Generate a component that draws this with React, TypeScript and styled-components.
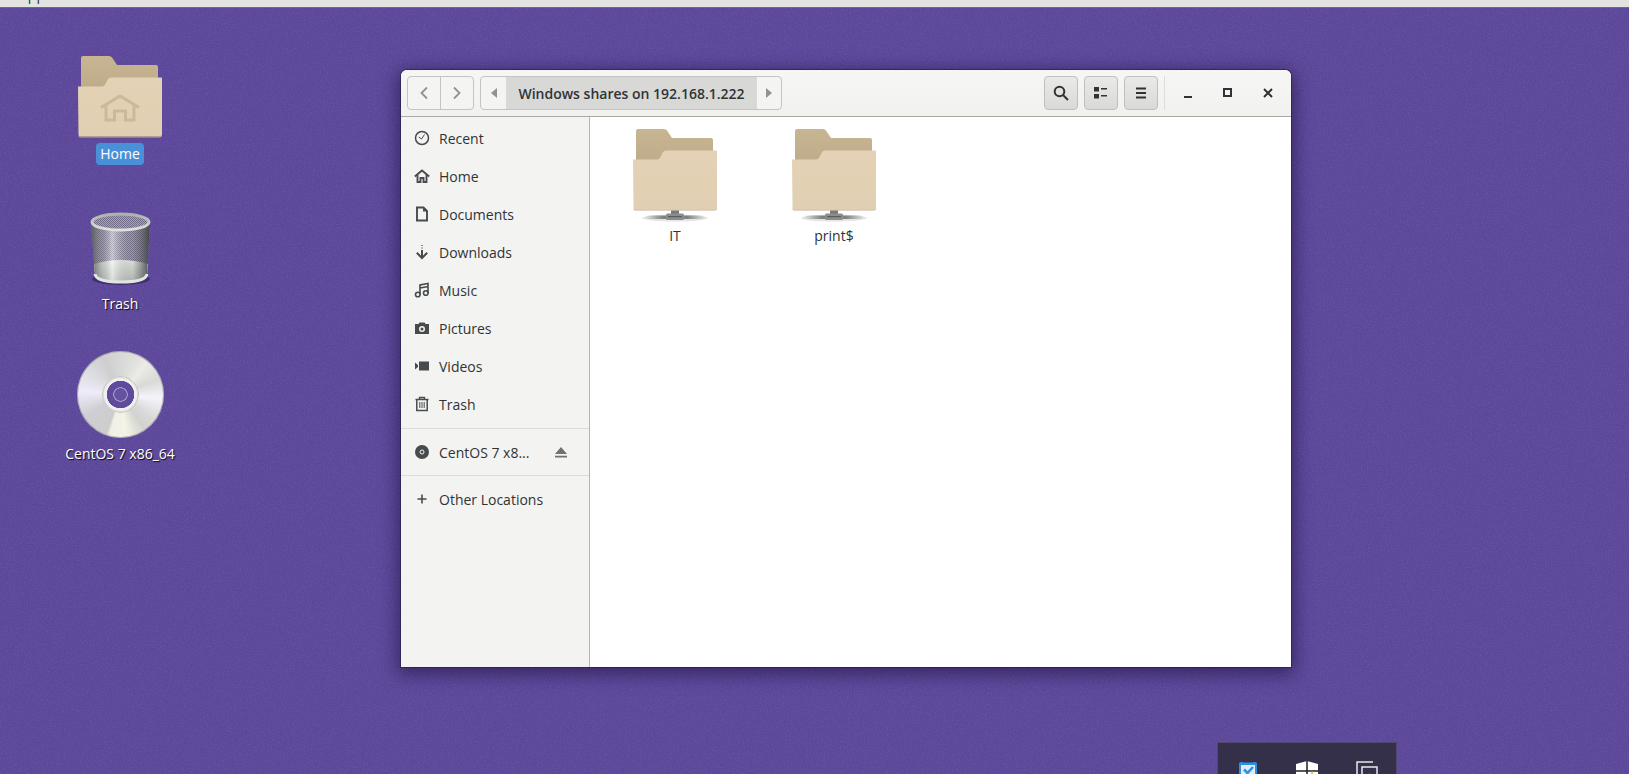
import styled, { createGlobalStyle } from 'styled-components';
import type { ReactNode } from 'react';

const GlobalStyle = createGlobalStyle`
  html, body {
    margin: 0;
    padding: 0;
    height: 100%;
    overflow: hidden;
  }
  body {
    font-family: "Open Sans", "Noto Sans", sans-serif;
    font-size: 14px;
  }
`;

const Desktop = styled.div`
  position: relative;
  width: 1629px;
  height: 774px;
  overflow: hidden;
  background-color: #5c479a;
`;

const NoiseLayer = styled.svg`
  position: absolute;
  left: 0;
  top: 0;
`;

const TopStrip = styled.div`
  position: relative;
  height: 7px;
  padding-left: 19px;
  overflow: hidden;
  background: #e3e3e1;
  border-bottom: 1px solid #6f6d72;
`;

// only the descenders of the menu title stick out below the top of the screen
const StripTitle = styled.div`
  margin-top: -12px;
  line-height: 14px;
  color: #2e3436;
`;

const DesktopArea = styled.div`
  position: relative;
  display: flex;
  height: 766px;
  padding-left: 60px;
`;

const IconColumn = styled.div`
  display: flex;
  flex-direction: column;
  width: 120px;
  padding-top: 47px;
`;

const DesktopItem = styled.div<{ $height: number }>`
  display: flex;
  flex-direction: column;
  align-items: center;
  height: ${(p) => p.$height}px;
`;

const DesktopLabel = styled.span<{ $selected?: boolean; $gap: number }>`
  margin-top: ${(p) => p.$gap}px;
  padding: 0 4px;
  height: 22px;
  line-height: 21px;
  border-radius: 4px;
  color: #fff;
  white-space: nowrap;
  background: ${(p) => (p.$selected ? '#4a90d9' : 'transparent')};
  text-shadow: ${(p) => (p.$selected ? 'none' : '1px 1px 1px rgba(0, 0, 0, 0.9)')};
`;

const DiscFace = styled.div`
  flex: none;
  width: 87px;
  height: 87px;
  border-radius: 50%;
  box-shadow: inset 0 0 0 1px rgba(150, 150, 160, 0.7);
  background:
    radial-gradient(
      circle,
      #6553a2 0 6px,
      #a99ecb 6.5px 7px,
      #5f4a9c 7.5px 13.5px,
      #f0f0ee 14px 16px,
      #c9c9c9 18px,
      transparent 18.5px
    ),
    conic-gradient(
      #d8d8d8 0deg,
      #e0e0dc 22deg,
      #ecebe6 40deg,
      #d9d9d6 68deg,
      #f4f4fa 95deg,
      #dadada 125deg,
      #d2d2d0 145deg,
      #f3f3e6 172deg,
      #f0f0e6 195deg,
      #cdcdcd 200deg,
      #cfcfd4 240deg,
      #eeecf8 275deg,
      #dcdce2 305deg,
      #cfcfd0 335deg,
      #d8d8d8 360deg
    );
`;

const Window = styled.div`
  position: absolute;
  left: 401px;
  top: 70px;
  width: 890px;
  height: 597px;
  display: flex;
  flex-direction: column;
  background: #fff;
  border-radius: 6px 6px 0 0;
  box-shadow:
    0 0 0 1px rgba(35, 25, 70, 0.55),
    0 4px 18px 3px rgba(20, 10, 50, 0.55);
  overflow: hidden;
`;

const HeaderBar = styled.div`
  flex: none;
  height: 46px;
  display: flex;
  align-items: center;
  padding: 0 3px 0 6px;
  background: linear-gradient(#f6f6f5, #f1f1f0);
  border-bottom: 1px solid #a9a8a3;
  box-sizing: content-box;
`;

const ButtonGroup = styled.div`
  display: flex;
  height: 34px;
  border: 1px solid #c4c4c1;
  border-radius: 4px;
  overflow: hidden;
  box-sizing: border-box;
  background: #f4f4f3;
`;

const NavButton = styled.div<{ $width: number; $divider?: boolean }>`
  width: ${(p) => p.$width}px;
  display: flex;
  align-items: center;
  justify-content: center;
  color: #929292;
  border-left: ${(p) => (p.$divider ? '1px solid #c4c4c1' : 'none')};
  box-sizing: border-box;
`;

const PathGroup = styled(ButtonGroup)`
  margin-left: 6px;
`;

const PathCrumb = styled.div`
  width: 251px;
  display: flex;
  align-items: center;
  justify-content: center;
  background: #d8d8d6;
  color: #2e3436;
  font-weight: 600;
  font-size: 14px;
`;

const Spacer = styled.div`
  flex: 1;
`;

const ToolButton = styled.div`
  width: 34px;
  height: 34px;
  margin-right: 6px;
  display: flex;
  align-items: center;
  justify-content: center;
  box-sizing: border-box;
  color: #2e3436;
  border: 1px solid #c0c0bc;
  border-radius: 4px;
  background: linear-gradient(#e9e9e7, #d9d9d6);
`;

const HeaderSeparator = styled.div`
  width: 1px;
  height: 34px;
  background: #dcdcda;
  margin-right: 3px;
`;

const WindowButton = styled.div`
  width: 40px;
  height: 34px;
  display: flex;
  align-items: center;
  justify-content: center;
  color: #2e3436;
`;

const Body = styled.div`
  flex: 1;
  min-height: 0;
  display: flex;
`;

const Sidebar = styled.div`
  flex: none;
  width: 188px;
  background: #f3f3f2;
  border-right: 1px solid #b4b4b1;
`;

const PlaceList = styled.div`
  padding: 2px 0 1px;
`;

const SideRow = styled.div`
  height: 38px;
  display: flex;
  align-items: center;
  padding-left: 13px;
  color: #2e3436;
`;

const SideIcon = styled.span`
  width: 16px;
  height: 16px;
  margin-right: 9px;
  color: #474b4c;
  display: flex;
  align-items: center;
  justify-content: center;
`;

const SideLabel = styled.span`
  flex: 1;
`;

const EjectSlot = styled.span`
  width: 12px;
  margin-right: 22px;
  display: flex;
  color: #6e7273;
`;

const SideDivider = styled.div`
  height: 1px;
  background: #dcdcda;
  margin: 4px 0;
`;

const Files = styled.div`
  flex: 1;
  display: flex;
  gap: 39px;
  padding: 11px 0 0 25px;
  align-items: flex-start;
`;

const FileItem = styled.div`
  width: 120px;
  display: flex;
  flex-direction: column;
  align-items: center;
  color: #2e3436;
`;

const FileLabel = styled.span`
  line-height: 19px;
  margin-top: 4px;
`;

const TrayPopup = styled.div`
  position: absolute;
  left: 1217px;
  top: 742px;
  width: 180px;
  height: 40px;
  display: flex;
  gap: 37px;
  padding: 18px 0 0 20px;
  box-sizing: border-box;
  background: #35304a;
  border: 1px solid #514a6e;
`;

const TrayIcon = styled.svg`
  flex: none;
  display: block;
`;

const FolderIcon = ({ home, share }: { home?: boolean; share?: boolean }) => {
  const id = home ? 'h' : 'n';
  return (
    <svg width="86" height={share ? 94 : 86} viewBox={share ? '0 0 86 94' : '0 0 86 86'}>
      <defs>
        <linearGradient id={`${id}back`} x1="0" y1="0" x2="0" y2="1">
          <stop offset="0" stopColor="#c8b592" />
          <stop offset="0.8" stopColor="#bfac8a" />
          <stop offset="1" stopColor="#a8977a" />
        </linearGradient>
        <linearGradient id={`${id}front`} x1="0" y1="0" x2="0" y2="1">
          <stop offset="0" stopColor="#e5d2b6" />
          <stop offset="1" stopColor="#e0cfb2" />
        </linearGradient>
        <linearGradient id={`${id}band`} x1="0" y1="0" x2="1" y2="0">
          <stop offset="0" stopColor="#555" stopOpacity="0" />
          <stop offset="0.3" stopColor="#555" stopOpacity="0.7" />
          <stop offset="0.7" stopColor="#555" stopOpacity="0.7" />
          <stop offset="1" stopColor="#555" stopOpacity="0" />
        </linearGradient>
      </defs>
      <path
        d="M4 3 Q4 1 6 1 H32 Q34 1 35 2.500 L40 10 H79 Q81 10 81 12 V40 H4 Z"
        fill={`url(#${id}back)`}
      />
      <path
        d="M1 31.500 H25 Q27 31.500 28.500 29 L31 24 Q32 22.500 34 22.500 H84 Q85 22.500 85 23.500 V79.500 Q85 81.500 83 81.500 H3 Q1.500 81.500 1.500 79.500 Z"
        fill={`url(#${id}front)`}
      />
      <path d="M1.500 79.500 Q1.500 81.500 3 81.500 H83 Q85 81.500 85 79.500 V80.500 Q85 82.500 83 82.500 H3 Q1.500 82.500 1.500 80.500 Z" fill="#c4ad8a" />
      {home && (
        <path
          d="M24 52.500 L43 41 L62 52.500 M29 50 V65 H37.500 V56 H48.500 V65 H57 V50"
          fill="none"
          stroke="#cdb89a"
          strokeWidth="3"
        />
      )}
      {share && (
        <g>
          <ellipse cx="43" cy="90" rx="33" ry="3.500" fill="#000" opacity="0.1" />
          <rect x="13" y="87.500" width="60" height="3.500" fill={`url(#${id}band)`} />
          <rect x="39" y="82.500" width="8" height="4" fill="#77797a" />
          <rect x="34" y="85.500" width="18" height="6.500" rx="1.500" fill="#8b8d8e" />
          <rect x="36" y="88" width="14" height="1.200" fill="#5a5c5e" />
        </g>
      )}
    </svg>
  );
};

const TrashIcon = () => (
  <svg width="64" height="74" viewBox="0 0 64 74">
    <defs>
      <pattern id="mesh" width="2" height="2" patternUnits="userSpaceOnUse">
        <rect width="2" height="2" fill="#a8a5ba" />
        <rect width="1" height="1" fill="#6f6b86" />
        <rect x="1" y="1" width="1" height="1" fill="#6f6b86" />
      </pattern>
      <linearGradient id="binSide" x1="0" y1="0" x2="1" y2="0">
        <stop offset="0" stopColor="#54585a" stopOpacity="0.95" />
        <stop offset="0.2" stopColor="#8a8c8e" stopOpacity="0.35" />
        <stop offset="0.36" stopColor="#fff" stopOpacity="0.5" />
        <stop offset="0.7" stopColor="#666" stopOpacity="0.1" />
        <stop offset="1" stopColor="#3c4244" stopOpacity="0.95" />
      </linearGradient>
      <linearGradient id="binFloor" x1="0" y1="0" x2="0" y2="1">
        <stop offset="0" stopColor="#e6ece6" />
        <stop offset="1" stopColor="#b4bab4" />
      </linearGradient>
      <linearGradient id="binRim" x1="0" y1="0" x2="0" y2="1">
        <stop offset="0" stopColor="#aeb0ae" />
        <stop offset="1" stopColor="#dfe1df" />
      </linearGradient>
    </defs>
    <ellipse cx="33" cy="67" rx="29" ry="6" fill="#1c1436" opacity="0.45" />
    <path d="M3 10 L7 63 Q8 71 33 71 Q58 71 59 63 L62 10 Z" fill="url(#mesh)" />
    <path d="M6 52 Q33 44 60 52 L59 63 Q58 71 33 71 Q8 71 7 63 Z" fill="url(#binFloor)" />
    <path d="M3 10 L7 63 Q8 71 33 71 Q58 71 59 63 L62 10 Z" fill="url(#binSide)" />
    <path d="M7 62 Q8 70 33 70 Q58 70 59 62" fill="none" stroke="#e2e6e2" strokeWidth="3" />
    <ellipse cx="32.500" cy="10" rx="28.500" ry="8" fill="url(#mesh)" stroke="url(#binRim)" strokeWidth="3" />
  </svg>
);

const Chevron = ({ dir }: { dir: 'left' | 'right' }) => (
  <svg width="12" height="14" viewBox="0 0 12 14" fill="none" stroke="currentColor" strokeWidth="1.800">
    <path d={dir === 'left' ? 'M9 1.500 L3.500 7 L9 12.500' : 'M3 1.500 L8.500 7 L3 12.500'} />
  </svg>
);

const Arrow = ({ dir }: { dir: 'left' | 'right' }) => (
  <svg width="6" height="10" viewBox="0 0 6 10" fill="currentColor">
    <path d={dir === 'left' ? 'M6 0 V10 L0 5 Z' : 'M0 0 V10 L6 5 Z'} />
  </svg>
);

const sideIcons: Record<string, ReactNode> = {
  recent: (
    <svg width="16" height="16" viewBox="0 0 16 16" fill="none" stroke="currentColor" strokeWidth="1.500">
      <circle cx="8" cy="8" r="6.500" />
      <path d="M4.800 7 L7.500 9 L10.500 4.500" strokeWidth="1" />
    </svg>
  ),
  home: (
    <svg width="16" height="16" viewBox="0 0 16 16" fill="none" stroke="currentColor" strokeWidth="1.900">
      <path d="M0.800 8.500 L8 2.500 L15.200 8.500" />
      <path d="M3.500 7 V14 H6.500 V10 H9.500 V14 H12.500 V7" />
    </svg>
  ),
  doc: (
    <svg width="16" height="16" viewBox="0 0 16 16" fill="none" stroke="currentColor" strokeWidth="1.900">
      <path d="M3 1.500 H9.500 L13 5 V14.500 H3 Z" />
      <path d="M9 1.500 V5.500 H13 Z" fill="currentColor" stroke="none" />
    </svg>
  ),
  download: (
    <svg width="16" height="16" viewBox="0 0 16 16" fill="none" stroke="currentColor">
      <path d="M8 1 V2 M8 3.500 V4.500" strokeWidth="1.300" />
      <path d="M8 6 V13 M2.800 8.800 L8 14 L13.200 8.800" strokeWidth="2" />
    </svg>
  ),
  music: (
    <svg width="16" height="16" viewBox="0 0 16 16" fill="none" stroke="currentColor" strokeWidth="1.600">
      <circle cx="3.800" cy="12.500" r="2.300" />
      <circle cx="11.800" cy="11" r="2.300" />
      <path d="M6 12.500 V3 L14 1.500 V11 M6 6 L14 4.500" />
    </svg>
  ),
  camera: (
    <svg width="16" height="16" viewBox="0 0 16 16" fill="currentColor">
      <path
        fillRule="evenodd"
        d="M1 4 H4.500 L5.500 2.500 H10.500 L11.500 4 H15 V14 H1 Z M8 6 A3 3 0 1 0 8 12 A3 3 0 1 0 8 6 Z M8 7.500 A1.500 1.500 0 1 1 8 10.500 A1.500 1.500 0 1 1 8 7.500 Z"
      />
    </svg>
  ),
  video: (
    <svg width="16" height="16" viewBox="0 0 16 16" fill="currentColor">
      <path d="M5 3.500 H15 V12.500 H5 Z M1 4.500 L4 7 V9 L1 11.500 Z" />
    </svg>
  ),
  trash: (
    <svg width="16" height="16" viewBox="0 0 16 16" fill="none" stroke="currentColor" strokeWidth="1.300">
      <path d="M1.500 3.500 H14.500 M5.500 3.500 V1.500 H10.500 V3.500" />
      <path d="M2.800 3.500 V14.500 H13.200 V3.500" strokeWidth="1.500" />
      <path d="M5.800 6 V12 M8 6 V12 M10.200 6 V12" strokeWidth="1" />
    </svg>
  ),
  disc: (
    <svg width="16" height="16" viewBox="0 0 16 16" fill="none">
      <circle cx="8" cy="8" r="7" fill="currentColor" />
      <circle cx="8" cy="8" r="2" stroke="#f3f3f2" strokeWidth="1" />
    </svg>
  ),
  plus: (
    <svg width="16" height="16" viewBox="0 0 16 16" fill="none" stroke="currentColor" strokeWidth="1.600">
      <path d="M8 3.500 V12.500 M3.500 8 H12.500" />
    </svg>
  ),
};

const places = [
  ['recent', 'Recent'],
  ['home', 'Home'],
  ['doc', 'Documents'],
  ['download', 'Downloads'],
  ['music', 'Music'],
  ['camera', 'Pictures'],
  ['video', 'Videos'],
  ['trash', 'Trash'],
];

const App = () => (
  <Desktop>
    <GlobalStyle />
    <NoiseLayer width="1629" height="774">
      <filter id="grain">
        <feTurbulence type="fractalNoise" baseFrequency="0.7" numOctaves="2" seed="4" />
        <feColorMatrix values="0 0 0 0 1  0 0 0 0 1  0 0 0 0 1  0.5 0 0 0 -0.2" />
      </filter>
      <rect width="1629" height="774" filter="url(#grain)" opacity="0.3" />
    </NoiseLayer>
    <TopStrip>
      <StripTitle>Applications</StripTitle>
    </TopStrip>
    <DesktopArea>
      <IconColumn>
        <DesktopItem $height={157}>
          <FolderIcon home />
          <DesktopLabel $selected $gap={2}>Home</DesktopLabel>
        </DesktopItem>
        <DesktopItem $height={139}>
          <TrashIcon />
          <DesktopLabel $gap={7}>Trash</DesktopLabel>
        </DesktopItem>
        <DesktopItem $height={150}>
          <DiscFace />
          <DesktopLabel $gap={5}>CentOS 7 x86_64</DesktopLabel>
        </DesktopItem>
      </IconColumn>
    </DesktopArea>

    <Window>
      <HeaderBar>
        <ButtonGroup>
          <NavButton $width={32}>
            <Chevron dir="left" />
          </NavButton>
          <NavButton $width={33} $divider>
            <Chevron dir="right" />
          </NavButton>
        </ButtonGroup>
        <PathGroup>
          <NavButton $width={25}>
            <Arrow dir="left" />
          </NavButton>
          <PathCrumb>Windows shares on 192.168.1.222</PathCrumb>
          <NavButton $width={24}>
            <Arrow dir="right" />
          </NavButton>
        </PathGroup>
        <Spacer />
        <ToolButton>
          <svg width="16" height="16" viewBox="0 0 16 16" fill="none" stroke="currentColor" strokeWidth="2">
            <circle cx="6.500" cy="6.500" r="4.800" />
            <path d="M10 10 L15 15" />
          </svg>
        </ToolButton>
        <ToolButton>
          <svg width="14" height="12" viewBox="0 0 14 12" fill="currentColor">
            <path d="M0 0 H5 V4.500 H0 Z M0 7 H5 V11.500 H0 Z M7 1 H13 V2.500 H7 Z M7 8 H13 V9.500 H7 Z" />
          </svg>
        </ToolButton>
        <ToolButton>
          <svg width="12" height="12" viewBox="0 0 12 12" fill="currentColor">
            <path d="M1 0.500 H11 V2.500 H1 Z M1 5 H11 V7 H1 Z M1 9.500 H11 V11.500 H1 Z" />
          </svg>
        </ToolButton>
        <HeaderSeparator />
        <WindowButton>
          <svg width="10" height="10" viewBox="0 0 10 10" fill="currentColor">
            <path d="M1 8 H9 V10 H1 Z" />
          </svg>
        </WindowButton>
        <WindowButton>
          <svg width="10" height="10" viewBox="0 0 10 10" fill="none" stroke="currentColor" strokeWidth="2">
            <rect x="1" y="1" width="7" height="7" />
          </svg>
        </WindowButton>
        <WindowButton>
          <svg width="10" height="10" viewBox="0 0 10 10" fill="none" stroke="currentColor" strokeWidth="2">
            <path d="M1 1 L9 9 M9 1 L1 9" />
          </svg>
        </WindowButton>
      </HeaderBar>
      <Body>
        <Sidebar>
          <PlaceList>
            {places.map(([icon, label]) => (
              <SideRow key={label}>
                <SideIcon>{sideIcons[icon]}</SideIcon>
                <SideLabel>{label}</SideLabel>
              </SideRow>
            ))}
          </PlaceList>
          <SideDivider />
          <SideRow>
            <SideIcon>{sideIcons.disc}</SideIcon>
            <SideLabel>CentOS 7 x8...</SideLabel>
            <EjectSlot>
              <svg width="12" height="11" viewBox="0 0 14 12" fill="currentColor" preserveAspectRatio="none">
                <path d="M7 0 L14 7.500 H0 Z M0 9.500 H14 V11.500 H0 Z" />
              </svg>
            </EjectSlot>
          </SideRow>
          <SideDivider />
          <SideRow>
            <SideIcon>{sideIcons.plus}</SideIcon>
            <SideLabel>Other Locations</SideLabel>
          </SideRow>
        </Sidebar>
        <Files>
          <FileItem>
            <FolderIcon share />
            <FileLabel>IT</FileLabel>
          </FileItem>
          <FileItem>
            <FolderIcon share />
            <FileLabel>print$</FileLabel>
          </FileItem>
        </Files>
      </Body>
    </Window>

    <TrayPopup>
      <TrayIcon width="20" height="24" viewBox="0 0 20 24">
        <path d="M1 3 Q1 1 3 1 Q10 2 17 1 Q19 1 19 3 V15 Q19 21 10 24 Q1 21 1 15 Z" fill="#2f8fe0" />
        <path d="M3 4 H17 V15 H3 Z" fill="#dcecf8" />
        <path d="M6 8.500 L9.500 12 L15 6" fill="none" stroke="#2f8fe0" strokeWidth="2.500" />
      </TrayIcon>
      <TrayIcon width="24" height="24" viewBox="0 0 24 24">
        <path d="M1 3 L12 0 L23 3 V24 H1 Z" fill="#fff" />
        <path d="M12 0 V24 M1 10 H23" stroke="#222" strokeWidth="1.500" />
        <path d="M17 10 L19.500 15 H14.500 Z" fill="#f2c21a" />
      </TrayIcon>
      <TrayIcon width="22" height="24" viewBox="0 0 22 24" fill="none" stroke="#e8e8ea" strokeWidth="1.500">
        <path d="M1 14 V1 H17" />
        <path d="M6 24 V6 H21 V24" />
        <path d="M13 12 L18 16 L13 20 Z" fill="#5fa83c" stroke="none" />
      </TrayIcon>
    </TrayPopup>
  </Desktop>
);

export default App;
